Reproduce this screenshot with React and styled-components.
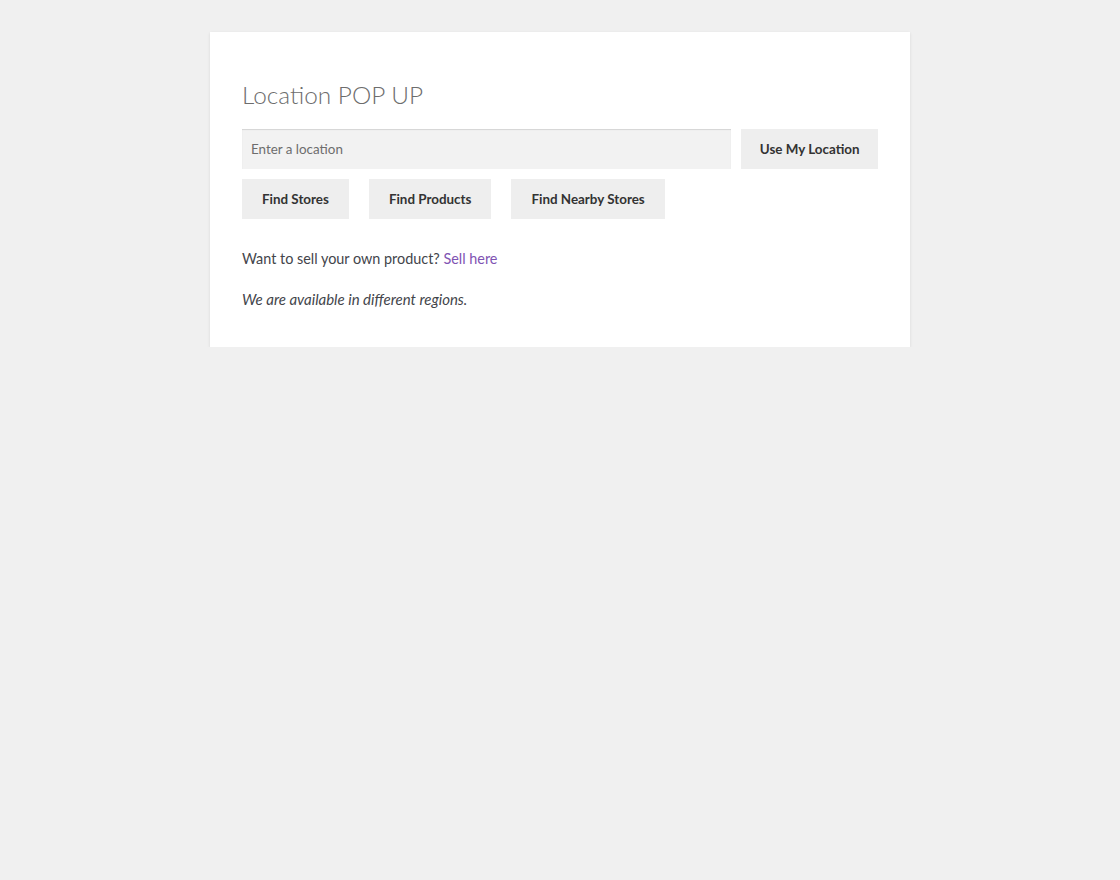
import React from "react";
import styled, { createGlobalStyle } from "styled-components";

const GlobalStyle = createGlobalStyle`
  body {
    margin: 0;
    background: #f0f0f0;
    font-family: "Lato", "Open Sans", "Liberation Sans", sans-serif;
    color: #43454b;
  }
`;

const Card = styled.div`
  width: 700px;
  box-sizing: border-box;
  margin: 32px auto 0;
  padding: 32px 32px 36px;
  background: #fff;
  box-shadow: 0 1px 3px rgba(0, 0, 0, 0.1);
`;

const Title = styled.h2`
  margin: 14px 0 17px;
  font-size: 24.4px;
  line-height: 34px;
  font-weight: 300;
  color: #6d6d6d;
`;

const SearchRow = styled.div`
  display: flex;
  gap: 10px;
`;

const Input = styled.input`
  flex: 1;
  height: 40px;
  box-sizing: border-box;
  border: 0;
  padding: 0 9px;
  background: #f2f2f2;
  box-shadow: inset 0 1px 1px rgba(0, 0, 0, 0.125);
  font-family: inherit;
  font-size: 13.4px;
  color: #43454b;
  outline: none;
  &::placeholder {
    color: #6d6d6d;
  }
`;

const Button = styled.button`
  height: 40px;
  padding: 0 ${(p) => p.$pad || 20}px;
  border: 0;
  background: #eeeeee;
  font-family: "Lato", "Liberation Sans", sans-serif;
  font-weight: 700;
  font-size: 13.4px;
  color: #333333;
  cursor: pointer;
`;

const ButtonRow = styled.div`
  display: flex;
  gap: 20px;
  margin-top: 10px;
`;

const Text = styled.p`
  margin: ${(p) => p.$top}px 0 0;
  font-size: ${(p) => (p.$italic ? 15 : 14.4)}px;
  line-height: 24px;
  font-style: ${(p) => (p.$italic ? "italic" : "normal")};
`;

const Link = styled.a`
  color: #7f54b3;
  text-decoration: none;
`;

export default function App() {
  return (
    <>
      <GlobalStyle />
      <Card>
        <Title>Location POP UP</Title>
        <SearchRow>
          <Input placeholder="Enter a location" />
          <Button $pad={18.5}>Use My Location</Button>
        </SearchRow>
        <ButtonRow>
          <Button>Find Stores</Button>
          <Button>Find Products</Button>
          <Button>Find Nearby Stores</Button>
        </ButtonRow>
        <Text $top={28}>
          Want to sell your own product? <Link href="#">Sell here</Link>
        </Text>
        <Text $top={16} $italic>
          We are available in different regions.
        </Text>
      </Card>
    </>
  );
}
